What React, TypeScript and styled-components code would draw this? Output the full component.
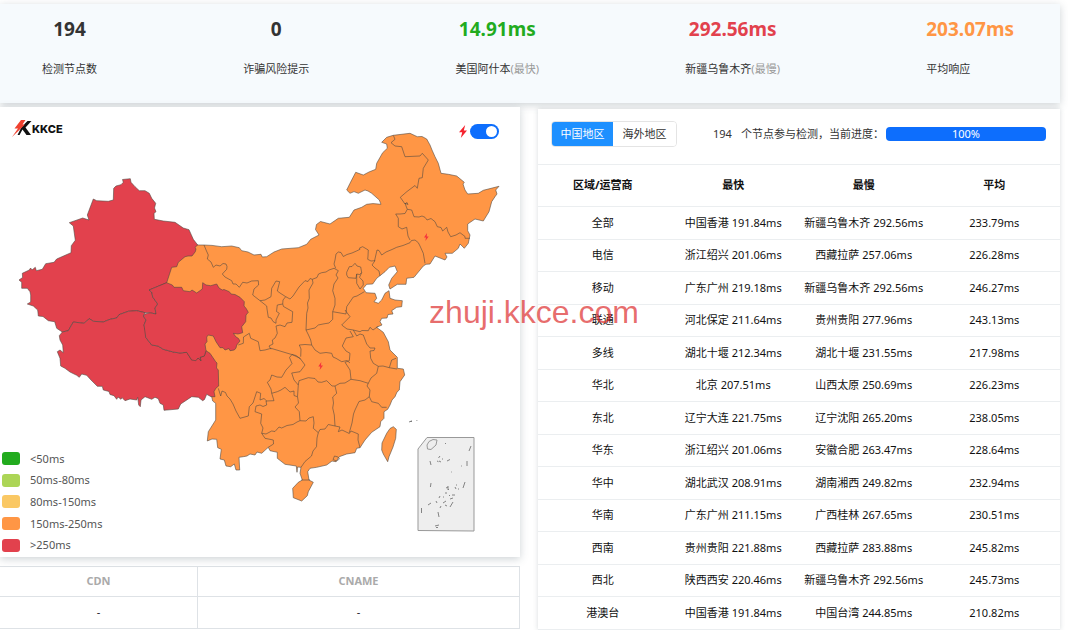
import React from 'react';
import styled, { createGlobalStyle } from 'styled-components';

const GlobalStyle = createGlobalStyle`
  *, *::before, *::after { box-sizing: border-box; }
  html { overflow: hidden; }
  body {
    margin: 0;
    background: #fff;
    color: #212529;
    font-family: "Noto Sans", "Noto Sans CJK SC", sans-serif;
    font-size: 11px;
    line-height: 16px;
  }
`;

const Page = styled.div`
  position: relative;
  padding: 4px 8px 0 0;
`;

const Summary = styled.section`
  display: flex;
  justify-content: space-between;
  height: 99px;
  padding: 11px 46px 0 42px;
  background: #f6fafd;
  box-shadow: 0 2px 8px rgba(60, 80, 90, 0.25);
`;

const Stat = styled.div<{ $start?: boolean }>`
  text-align: ${(p) => (p.$start ? 'left' : 'center')};
`;

const StatValue = styled.div<{ $color: string }>`
  color: ${(p) => p.$color};
  font-size: 19px;
  font-weight: 700;
  line-height: 28px;
`;

const StatLabel = styled.div`
  margin-top: 18px;
  color: #333;
`;

const Muted = styled.span`
  color: #999;
`;

const Columns = styled.main`
  display: grid;
  grid-template-columns: 520fr 522fr;
  gap: 18px;
  align-items: start;
  padding-top: 4px;
`;

const MapCard = styled.section`
  position: relative;
  height: 450px;
  background: #fff;
  box-shadow: 0 2px 8px rgba(60, 80, 90, 0.25);
`;

const MapSvg = styled.svg`
  display: block;
  width: 100%;
  height: 450px;
`;

const Brand = styled.a`
  position: absolute;
  left: 12px;
  top: 13px;
  display: flex;
  align-items: center;
  color: #111;
  font-family: Inter, sans-serif;
  font-size: 11px;
  font-weight: 800;
  text-decoration: none;
`;

const SwitchLabel = styled.label`
  position: absolute;
  right: 21px;
  top: 17px;
  display: flex;
  align-items: center;
  gap: 2px;
`;

const Switch = styled.input`
  appearance: none;
  width: 29px;
  height: 15px;
  margin: 0;
  padding: 2px;
  border-radius: 8px;
  background: #0d6efd;
  &::before {
    content: '';
    display: block;
    width: 11px;
    height: 11px;
    margin-left: 14px;
    border-radius: 50%;
    background: #fff;
  }
`;

const Legend = styled.ul`
  position: absolute;
  left: 2px;
  bottom: 1px;
  display: grid;
  grid-auto-rows: 1fr;
  height: 108px;
  margin: 0;
  padding: 0;
  list-style: none;
  color: #555;
`;

const LegendItem = styled.li`
  display: flex;
  align-items: center;
  gap: 10px;
`;

const Swatch = styled.span<{ $color: string }>`
  width: 18px;
  height: 13px;
  border-radius: 3px;
  background: ${(p) => p.$color};
`;

const DnsTable = styled.table`
  width: 100%;
  margin-top: 9px;
  border-collapse: collapse;
  table-layout: fixed;
  text-align: center;
  th, td { border: 1px solid #dee2e6; padding: 0 0 2px; }
  th:first-child, td:first-child { border-left: 0; width: 38%; }
  th { height: 30px; color: #aaa; font-weight: 700; }
  td { height: 32px; }
`;

const ResultCard = styled.section`
  margin-top: 2px;
  background: #fff;
  box-shadow: 0 0 5px rgba(60, 80, 90, 0.2);
`;

const Toolbar = styled.div`
  display: flex;
  align-items: center;
  height: 55px;
  padding: 0 14px 5px 13px;
`;

const Tabs = styled.div`
  display: flex;
  flex: none;
  height: 26px;
  border: 1px solid #e4e4e4;
  border-radius: 4px;
  overflow: hidden;
`;

const Tab = styled.button<{ $active?: boolean }>`
  width: ${(p) => (p.$active ? 61 : 63)}px;
  padding: 0;
  border: 0;
  background: ${(p) => (p.$active ? '#1e90ff' : '#fff')};
  color: ${(p) => (p.$active ? '#fff' : '#333')};
  font: inherit;
`;

const ProgressText = styled.div`
  display: flex;
  flex: none;
  gap: 9px;
  margin-left: 36px;
  color: #333;
`;

const Progress = styled.div`
  flex: 1;
  height: 14px;
  margin-left: 2px;
  border-radius: 4px;
  background: #0d6efd;
  color: #fff;
  line-height: 13px;
  text-align: center;
`;

const ResultTable = styled.table`
  width: 100%;
  border-collapse: collapse;
  table-layout: fixed;
  text-align: center;
  color: #111;
  th, td { padding: 0 1px 1px 0; border-top: 1px solid #ebeef0; white-space: nowrap; }
  th { height: 42px; font-weight: 700; }
  td { height: 32px; }
  tr:nth-child(odd) td { height: 33px; }
  tbody tr:last-child td { border-bottom: 1px solid #ebeef0; }
`;

const Watermark = styled.div`
  position: absolute;
  top: 294px;
  left: 0;
  right: 0;
  color: rgba(222, 52, 52, 0.72);
  font-family: "Liberation Sans", Arial, sans-serif;
  font-size: 32px;
  line-height: 36px;
  text-align: center;
  pointer-events: none;
`;

const legend = [
  ['#22ab1e', '<50ms'],
  ['#acd556', '50ms-80ms'],
  ['#fac864', '80ms-150ms'],
  ['#ff9645', '150ms-250ms'],
  ['#e2414d', '>250ms'],
];

const rows = [
  ['全部', '中国香港 191.84ms', '新疆乌鲁木齐 292.56ms', '233.79ms'],
  ['电信', '浙江绍兴 201.06ms', '西藏拉萨 257.06ms', '226.28ms'],
  ['移动', '广东广州 219.18ms', '新疆乌鲁木齐 292.56ms', '246.27ms'],
  ['联通', '河北保定 211.64ms', '贵州贵阳 277.96ms', '243.13ms'],
  ['多线', '湖北十堰 212.34ms', '湖北十堰 231.55ms', '217.98ms'],
  ['华北', '北京 207.51ms', '山西太原 250.69ms', '226.23ms'],
  ['东北', '辽宁大连 221.75ms', '辽宁沈阳 265.20ms', '238.05ms'],
  ['华东', '浙江绍兴 201.06ms', '安徽合肥 263.47ms', '228.64ms'],
  ['华中', '湖北武汉 208.91ms', '湖南湘西 249.82ms', '232.94ms'],
  ['华南', '广东广州 211.15ms', '广西桂林 267.65ms', '230.51ms'],
  ['西南', '贵州贵阳 221.88ms', '西藏拉萨 283.88ms', '245.82ms'],
  ['西北', '陕西西安 220.46ms', '新疆乌鲁木齐 292.56ms', '245.73ms'],
  ['港澳台', '中国香港 191.84ms', '中国台湾 244.85ms', '210.82ms'],
];

const EAST =
  'M197.7 245 204 245 212 245.4 221.7 246.7 231.7 246 239.3 247.7 241.7 250.7 248 252 254 255 261 254.3 262.3 257 266.7 256.7 274 252 281.7 249 298.3 247.7 306.7 244.3 310.7 239.3 319 235 315.5 229.5 316.5 224.5 320.5 221.5 330 224 338.3 218.3 349.3 217.3 354 210 361.7 207.3 366.7 204.3 373 203.6 381 204.3 379.3 200 371.7 193.3 368 191 365 190 358.3 193.3 354 191.6 350 193.3 346.7 190 350 183.3 355.7 172.3 363.3 175 369 172 375.7 169.3 376.7 163.3 382.7 152.7 387.3 148.3 386.7 144 381.7 142.3 386.7 137.3 393.3 135.3 410 133.3 417.3 136.7 422 136.5 426.7 139 430 145 432 150 435 156.7 438.3 163.3 441 173.3 448.3 174.3 456.7 176 464.3 182.3 463 184 465 190 467.7 194 478.3 193.3 483.3 190.3 499 186.3 495.7 190 497 194 495 196.7 491.7 201.7 489 211.7 483.3 221 475 219 467.7 224 467.7 230.7 470 235 468.3 243.3 464.3 248.3 460 244 458.3 248.3 452.3 253.3 445 253.3 447 257 445 260 435 256 430 264 426 264.3 423.3 266 414 277.3 406.7 278.3 406 284.3 397.3 284.3 390 289 388.7 285 391.7 278.3 397.3 271.7 395 266 389.3 267.3 385 271.7 376.7 278.3 372.7 284 366.7 284.3 363.3 288.3 366 292.7 375 293.3 376.7 298.3 374 301.7 378.3 303.3 381.7 300 385 293.3 389 290.7 390 298.3 395 300 402.3 300.7 401.7 306.7 396.7 307.3 391.7 310.7 393 314 388 314.5 387 318 381.7 318.3 380 321.7 382 325 376.5 327.3 383.3 332.3 388.3 341.7 390 350 397.3 357.3 397.3 368.3 403.3 369 404.7 375 400 381.7 399.3 390 397 392 395 396.7 392 400 390 405 387.7 409.3 384 411.7 384 418.3 380.7 421.7 380 426.7 371.7 432.3 365 440 360 447.7 356.7 448.3 355 452.7 346.7 454 339.3 456.7 336 461.7 332 461 326.7 465 316.7 467.3 310 468.3 307.7 471.7 309 480 313.3 482.3 308.3 491.7 307.3 495.7 301.7 501 293.3 497.7 292.7 488.3 298.3 482.3 302.3 480 300 473.3 301 467.3 297.5 467 297 472.3 296.3 466 285 464.3 277.3 458.3 277.3 452.3 270 450.7 268.3 447.3 261.7 453.3 257 452 255 455 250 454 247 456 243.3 456.7 239 457.3 239.7 470 236 470 234.3 464 230.7 466.7 226 466 224.3 460 220 459 221.3 449.3 217.7 447.7 216.7 439.3 212 439 207.3 441 208.3 431.7 215.7 420 215.7 403.3 212.7 401 211.7 396.7 190 370 160 286 163 262 184 246 190 243Z';

const XINJIANG =
  'M123.3 182.3 122.5 179.5 130.3 178.7 131 182.3 135 186.7 139.3 190.7 145 190.7 149.3 193.3 151.7 198.3 155.7 203.3 154.5 208 156 211.7 154 213.3 154.3 219.3 163.3 221 175 222.3 183.3 228 189 229.7 193.3 239.3 197.7 245 195 247.3 196 249 195.3 251.7 192 256 188 256 185 256.7 178.3 262.3 176.7 266.7 171.7 267.3 166.7 282.7 151.7 289 149 290 151.7 292 152.7 297 157.7 304 155 308 156 314 150 312.8 145 312.7 136.7 310.7 128.3 311.3 119 314.7 116.7 318 110 319.3 103.3 322 93.3 321.3 89.3 318.7 84 323.3 73.3 322 68.3 330.7 62.3 332 56.7 328.3 54.7 321.7 48.3 320.7 43 316.5 38.3 316 37.7 310 33.3 306 27.3 304 30.7 302 30.7 295 30 291.7 27.3 288.3 21.7 288.3 21.7 282.3 19 280 22.6 277.5 22.3 273.3 29.3 270 30.6 268 32 270 35.3 267.3 36.3 270.7 42.3 269.3 45.7 263.7 54 262.3 56.7 259 71 252.7 71.3 245.7 75.3 240.3 73.3 226 69.3 222.7 82.7 218 89 220 87.3 215 93.3 199 96.7 200.7 108.3 201.3 113.3 200 113.7 188.3 116 186 121 184.7Z';

const TIBET =
  'M62.3 332 59.3 335.7 60 340 62.7 345 63.3 352.7 60 350 57.3 351.7 60 358.3 60.7 366 65 368.3 70 372 76.7 375.3 79.3 377.3 81.7 374 86.7 375.3 91 380 97.3 386.3 102.3 386.3 103.3 390 109 391.5 110 394.5 114 395.7 116.7 399.3 118 397 121 399.3 122 397.6 125 400.7 130 399 136.7 400 137.7 397.3 138.7 405 140.3 406.7 141 400 145 396.7 151.7 399.3 155 397.3 158.3 398.7 160 403.3 163.3 405 164 410.3 178.3 409 180.7 404 191.7 396.7 198.3 397.3 202.7 400.7 204.5 399.5 206.7 394.3 211 396.7 215 396.7 214 391.7 216 388 218.7 386 218.3 370 216.5 368 217 363 215.7 361.7 210 353.3 206 350.7 204.3 356 200 357.3 201 360.7 198 358 195.7 360.7 194 359 191.7 360 186.7 352.3 180 353 173.3 352 163.3 349.3 158 346 151.7 345 145.7 337.3 145.7 331 144 325 146 320 143.3 316 145 312.7 136.7 310.7 128.3 311.3 119 314.7 116.7 318 110 319.3 103.3 322 93.3 321.3 89.3 318.7 84 323.3 73.3 322 68.3 330.7Z';

const QINGHAI =
  'M149 290 166.7 282.7 172.3 285 174 287.3 181.7 287.3 183.3 290.7 190 291.7 192 290 196.7 293 202.3 289 202.7 282.7 206 285 210.7 285.7 216.7 284 219 288 222.3 290 224 289.5 229.3 291.7 231 294 235 294.5 240 297.3 244.3 301.7 244 306 246 308.3 248.3 312.3 246 315 245.7 321.7 241.7 326.7 242.7 332.7 238 334 233.3 333.3 236 337 238.3 338.3 240 341 236.7 345 236 348 234.3 350 230 350.7 229 348.5 225 350 223 347.7 220 347.7 216 341.7 213.3 336 208.3 335 206.7 337 207 341.7 205 344 206 350.7 204.3 356 200 357.3 201 360.7 198 358 195.7 360.7 191.7 360 186.7 352.3 180 353 173.3 352 163.3 349.3 158 346 151.7 345 145.7 337.3 144 325 146 320 143.3 316 145 314 150 312.8 156 314 155 308 157.7 304 152.7 297 151.7 292Z';

const TAIWAN = 'M393.3 426.7 396.3 429.3 395.7 438.3 393 447 389 456.7 387.7 461.7 383.3 454 381.7 450 382 443 386.7 433.3 390 428.5Z';

const BORDERS = [
  // Gansu, Inner Mongolia and Ningxia
  'M204 245 206.5 251 208.3 255 207.3 259 211 262 213.3 267.3 216 265 220 266 223 263.5 226 264 227 266.5 226.7 269.3 222.3 274 225 277 231.7 280.7 233 284 236 284 239.3 287.3 242.7 282.3 247 283 251.7 281 258.3 280.7 258.6 285 254 289 252.7 295 260 300.7 265 300 271 296.7 271.7 288.3 276 281 279.7 281.7 277.3 291 280 293 285.7 296.7 290 299 293 296 295 293 299 287 305 280.7 308 281.5 310 278.5 312.3 279.3',
  'M260 300.7 266.7 306 267 309 268.3 317.3 271 318 273 321.5 276 323.3 276 320 279.3 313.3 276.5 311.5 277.3 305 282.7 304 283 300 285.7 296.7',
  'M282.7 304 283.5 306.5 292.7 311.7 292 322.3 287 323 285 326.7 280 325 276 326 277.3 333.3 275 338 272.3 340 273 344 269 346 271 349.3',
  // Shaanxi, Shanxi and Hebei
  'M312.3 279.3 313 283 309 290 309.3 298.3 307.5 303 308 308 306.7 313.3 306 330 308.5 335 310.7 340 311.7 345',
  'M312.3 279.3 317 277.5 318.5 274 321.7 272.7 326 272 329 270 334 268.3 338.3 270.7 336 275 338 278 334 284 332.7 290.7 335 298.3 335 305 332.7 311.7 332.7 319.3 329 323 323 324 318.3 325 315 328 306 330',
  'M335.7 268.3 334 264 335 260 336 254 338.3 252 341 252.5 343.3 256.5 347 254.5 352 253 356.5 251 360 249.3 359.5 248 362.7 246.7 368.3 250 368 256 367.7 259.3 371 261 375 260.7 372 265 375 268 379 271 380 276',
  'M374.5 261 377 250 379 250.5 381.7 255 386 252 392 249.5 396.7 247.3 403 245.5 410 242.7 411.5 240.5 415 240 418.3 242.7 420 246 423.3 253.3 425 263.3',
  'M410 240 408 236 406.7 227.3 402 229 398.3 226.7 398.3 218.3 395.7 214 400 214 405 213.5 407.3 209.3 411.7 210 414 216.7 419 217 422 216 425 217.3 427 220 431 218.5 435 221.7 437.3 226.7 441 227.5 442.7 231 446.7 227.3 448 232 450.7 236.7 456 235 460 232.7 465 236.5 465 238.3 470 238.3',
  'M407.3 209.3 405 203.3 408 204.5 407 202.5 405 204 400.3 197.3 407 191.5 415 185.5 417.3 188.3 419 178.3 422.3 177.7 423.3 168.3 428.3 160 422.3 153.3 420 156 405 156.7 401.7 146.7 395 146 391 142.7 395 139.3 393.3 135.3',
  'M346.7 272.3 349.3 266.7 352 266.5 355 263.3 357 266 360.7 267 361.7 272.7 359.5 274.5 356.7 274 356 278.3 348.3 277.7 346.7 275ZM361.7 272.7 359.5 277.3 363 281 363.3 285 360 289 356.7 283.3 356.7 274',
  // Shandong, Henan, Anhui, Jiangsu, Zhejiang
  'M364.3 291.7 357 296 353.3 297 346.7 306.7 346 314 332.7 311.7M345 310 350 316.7 341.7 325 347 329 353.3 330 360 331.7 362 330.5 368.3 330.7 370 327.3 373 330 378.3 326.3',
  'M353.3 330 356.7 336 360 334 363.3 335 366.7 344 370 348 375 348 374 350.5 370 351 370.7 358.3 373.3 363.3 378.3 366.3 383 366 389.3 367.7 391.7 360 396 358.3M389.3 367.7 397 369',
  'M378.3 366.3 376.7 373.3 371 378 368.3 383.3 367 386 370 390 369.3 396.7 371.7 401.7 378.3 403.3 381.7 407.3 386.7 407.3',
  'M350 331 353.3 336.7 346 338 342.3 346 346 351 350 353.3 349.3 360.7 345 362.3 350 370 351 379.3 360 380.7 368.3 383.3',
  'M311.7 345 315 350 320 353.3 326 352.5 331.7 353.3 333 357 336 358.3 341.7 361.7 347 360.5 350 363',
  // Hubei, Hunan, Jiangxi, Fujian
  'M291.7 373 294 380 298.3 385 299 380.7 308.3 377.7 315 378.5 318 382 321.7 382.3 326.7 380.7 332 386 335 386 340 383.3 345 383 351 379.3',
  'M335 386 336.7 393.3 332.7 397 333.5 403 332.7 408 334.3 415 335 426 328.3 424.5 325 429 320 429.5 318.3 432.7 313.3 428.3 314 423 313.3 416.7 309 418 306 421 300 420.7',
  'M335 426 340 427 338.3 431.7 342 430 349.3 433.5 351 431 358.3 434 358 440 360 447.7M349.3 432.7 352 423 353.5 414 355 410 359 401.5 365 400 369.3 396.7',
  // Guizhou, Chongqing, Sichuan, Yunnan, Guangxi
  'M298.3 385 297.5 396.7 298.5 403 295 407 299.3 411.7 300 420.7 297 422 293 424.5 287 425.5 281.7 428 279 427 275 431.5 271.7 431 266 434 261.7 433.3 263 428 260.7 423.3 261.7 414 255 411.7 256 406 260 405 263 406.5 266.7 405 266 401 274 400.7 271.7 393.3 277.3 391.7 281 390 285 387.3 290 392 294 391 294 395.5 297.3 396.7',
  'M271.7 393.3 271 389 267.3 382.3 270 380 271.7 375 277 377 281.7 377.3 286 370 292 363.5 289.5 357.5 292 354.5 300 358.3 305 365 300 371.7 291.7 373',
  'M238.3 345 243.3 343.3 243.5 337 249.3 333.3 250.7 338.3 258.3 341.7 260 350.7 265 350 271 348.3 280 351 290 354 296 355.5 300.7 359M300.7 356.7 301 349 299.3 345 305 344.5 311.7 345',
  'M218.3 388.3 220.7 396 222 391 225.5 392.5 227 396 230 399 233 404 236 411 240 418.3 248.3 416 249.3 406.7 253 403 256.7 391.7 260.7 393.3 260 400 264 398.5 266.7 401',
  'M261.7 433.3 265 438.3 273.3 440 273.5 444 268.3 447.3M318.3 432.7 317 438 316.5 446.7 313 451 311.5 456 305 461.5 301 467.3',
  'M301.5 480 310 480M333 459.5 334.5 456 338 457 339.5 459 336.5 461Z',
];

const ISLETS =
  'M409 422l3-1.200M410 421.500h2M416.500 420.500h.8M471 446l-2 5M430 461l1 4M467 461v5M431 483l-.6 4M465 482l-2 6M421.500 508v5M453 502l-3 5M428 505l3-2M438 512l1 5M435 526l4-1M436 527.500h2M448 486v4M440 456l-1.500 2M439 461l2 1M445 443l1 1M447 461l3-1.500M437 461l1.500.7M461 466h.8M451 472h.7M448 490l1-1M445 493h2M452 495h3M450 499l3-1M443 503l3-2M447 506l-2-1M436 501l1 2M439 498l1-2M455 487l1 2M458 489h1M456 485h1M440 508l1-2M443 497h1M449 495l1 1M446 488l2-1M442 459h1';

const BOLT = 'M6.2 0 0 7.3h3.2L1.8 13 8 5.6H4.8Z';

function ChinaMap() {
  return (
    <MapSvg viewBox="0 107 520 450" role="img" aria-label="检测节点地图">
      <g stroke="rgba(80,72,66,.58)" strokeWidth="1" strokeLinejoin="round">
        <path d={EAST} fill="#ff9645" />
        <path d={XINJIANG} fill="#e2414d" />
        <path d={TIBET} fill="#e2414d" />
        <path d={QINGHAI} fill="#e2414d" />
        <path d={TAIWAN} fill="#ff9645" />
        {BORDERS.map((d) => (
          <path key={d.slice(0, 16)} d={d} fill="none" />
        ))}
      </g>
      <path d="M427 437.5H474V531L418 530.5V449Z" fill="#eee" stroke="#999" />
      <path d="M433 439.5 437 440 436 445 431 449.5 427.5 449 427 445 429 441.5Z" fill="none" stroke="#999" />
      <path d={ISLETS} fill="none" stroke="#777" strokeWidth=".9" />
      <g fill="#f5333c">
        <path d="M427 233 424 237.5h2l-.7 3.5 3.4-4.6h-2Z" />
        <path d="M321.3 362 318.3 366.5h2l-.7 3.5 3.4-4.6h-2Z" />
      </g>
    </MapSvg>
  );
}

export default function App() {
  return (
    <>
      <GlobalStyle />
      <Page>
        <Summary>
          <Stat>
            <StatValue $color="#333">194</StatValue>
            <StatLabel>检测节点数</StatLabel>
          </Stat>
          <Stat>
            <StatValue $color="#333">0</StatValue>
            <StatLabel>诈骗风险提示</StatLabel>
          </Stat>
          <Stat>
            <StatValue $color="#22ab1e">14.91ms</StatValue>
            <StatLabel>美国阿什本<Muted>(最快)</Muted></StatLabel>
          </Stat>
          <Stat>
            <StatValue $color="#e2414d">292.56ms</StatValue>
            <StatLabel>新疆乌鲁木齐<Muted>(最慢)</Muted></StatLabel>
          </Stat>
          <Stat $start>
            <StatValue $color="#ff9645">203.07ms</StatValue>
            <StatLabel>平均响应</StatLabel>
          </Stat>
        </Summary>

        <Columns>
          <div>
            <MapCard>
              <ChinaMap />
              <Brand href="#">
                <svg width="20" height="17" viewBox="0 0 20 17" aria-hidden="true">
                  <path d="M11 5.5 15.5 1H19.5L13.5 7.5 19 15H14.5L10.5 9.5 7.5 15H5.5L9 8Z" fill="#111" />
                  <path d="M9 0H13.5L10.5 4.5H13L0 17 6 8.5H2.5Z" fill="#f0412f" />
                </svg>
                KKCE
              </Brand>
              <SwitchLabel>
                <svg width="9" height="14" viewBox="0 0 9 14" aria-hidden="true">
                  <path d={BOLT} fill="#f5222d" />
                </svg>
                <Switch type="checkbox" role="switch" aria-label="闪电标记" defaultChecked />
              </SwitchLabel>
              <Legend>
                {legend.map(([color, label]) => (
                  <LegendItem key={label}>
                    <Swatch $color={color} />
                    {label}
                  </LegendItem>
                ))}
              </Legend>
            </MapCard>
            <DnsTable>
              <thead>
                <tr><th>CDN</th><th>CNAME</th></tr>
              </thead>
              <tbody>
                <tr><td>-</td><td>-</td></tr>
              </tbody>
            </DnsTable>
          </div>

          <ResultCard>
            <Toolbar>
              <Tabs>
                <Tab type="button" $active>中国地区</Tab>
                <Tab type="button">海外地区</Tab>
              </Tabs>
              <ProgressText>
                <span>194</span>
                <span>个节点参与检测，当前进度：</span>
              </ProgressText>
              <Progress role="progressbar" aria-label="当前进度" aria-valuenow={100}>100%</Progress>
            </Toolbar>
            <ResultTable>
              <thead>
                <tr><th>区域/运营商</th><th>最快</th><th>最慢</th><th>平均</th></tr>
              </thead>
              <tbody>
                {rows.map((row) => (
                  <tr key={row[0]}>
                    {row.map((cell, i) => <td key={i}>{cell}</td>)}
                  </tr>
                ))}
              </tbody>
            </ResultTable>
          </ResultCard>
        </Columns>
        <Watermark>zhuji.kkce.com</Watermark>
      </Page>
    </>
  );
}
